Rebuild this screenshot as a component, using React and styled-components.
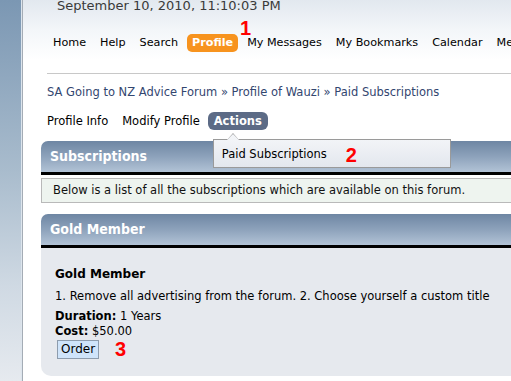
import React from "react";
import styled, { createGlobalStyle } from "styled-components";

const GlobalStyle = createGlobalStyle`
  html, body { margin: 0; padding: 0; overflow: hidden; background: #fff; }
  body { font-family: "DejaVu Sans", Verdana, sans-serif; font-size: 11.5px; color: #000; }
`;

const Shell = styled.div`
  display: flex;
  width: 511px;
  height: 381px;
  overflow: hidden;
`;

const Sidebar = styled.div`
  flex: 0 0 21px;
  background: linear-gradient(#7b97b3 0%, #a9bccd 45%, #cfd9e3 75%, #e6eaef 100%);
  border-right: 1px solid #dde5ed;
`;

const SideRule = styled.div`
  flex: 0 0 1px;
  background: #a4acb5;
`;

const Main = styled.div`
  flex: 1;
  min-width: 0;
  padding-left: 18px;
  background: linear-gradient(#e2e8ef 0px, #f3f6f9 30px, #ffffff 60px);
  overflow: hidden;
`;

const Top = styled.div`
  padding-left: 6px;
`;

const DateLine = styled.div`
  margin: -2px 0 0 10px;
  font-size: 13px;
  line-height: 16px;
  color: #3a3a3a;
  white-space: nowrap;
`;

const NavBar = styled.nav`
  display: flex;
  gap: 4px;
  margin: 20px 0 0 1px;
  font-size: 11.2px;
  white-space: nowrap;
`;

const NavItem = styled.span`
  position: relative;
  flex: none;
  padding: 0 5px;
  height: 18px;
  line-height: 18px;
  border-radius: 5px;
  background: ${(p) => (p.$active ? "#f7931e" : "transparent")};
  color: ${(p) => (p.$active ? "#fff" : "#000")};
  font-weight: ${(p) => (p.$active ? "bold" : "normal")};
`;

const Marker = styled.span`
  position: absolute;
  font-family: "Liberation Sans", Arial, sans-serif;
  font-weight: bold;
  font-size: 20px;
  line-height: 20px;
  color: #ff0000;
  top: ${(p) => p.$top}px;
  left: ${(p) => p.$left}px;
`;

const FlowMarker = styled.span`
  font-family: "Liberation Sans", Arial, sans-serif;
  font-weight: bold;
  font-size: 20px;
  line-height: 20px;
  color: #ff0000;
`;

const Divider = styled.hr`
  margin: 21px 0 0 0;
  border: 0;
  border-top: 1px solid #c8c8c8;
  height: 0;
`;

const Crumbs = styled.div`
  margin-top: 11px;
  line-height: 14px;
  color: #33466f;
  white-space: nowrap;
`;

const TabRow = styled.div`
  display: flex;
  gap: 2px;
  margin: 13px 0 0 -6px;
  white-space: nowrap;
`;

const Tab = styled.span`
  position: relative;
  flex: none;
  padding: 0 6px;
  height: 18px;
  line-height: 18px;
  border-radius: 6px;
  background: ${(p) => (p.$active ? "#5c6b86" : "transparent")};
  color: ${(p) => (p.$active ? "#fff" : "#000")};
  font-weight: ${(p) => (p.$active ? "bold" : "normal")};
`;

const Dropdown = styled.div`
  position: absolute;
  z-index: 5;
  top: 27px;
  left: 5px;
  width: 228px;
  height: 27px;
  padding-left: 8px;
  box-sizing: content-box;
  border: 1px solid #9a9a9a;
  background: linear-gradient(#f2f4f7, #e3e7ee);
  color: #000;
  font-weight: normal;
  line-height: 29px;

  &::before,
  &::after {
    content: "";
    position: absolute;
    left: 13px;
    width: 0;
    height: 0;
    border-left: 6px solid transparent;
    border-right: 6px solid transparent;
  }
  &::before {
    top: -7px;
    border-bottom: 7px solid #9a9a9a;
  }
  &::after {
    top: -6px;
    border-bottom: 6px solid #f2f4f7;
  }
`;

const SectionHeader = styled.div`
  margin-top: ${(p) => p.$gap}px;
  height: 31px;
  padding-left: 9px;
  border-top-left-radius: 7px;
  border-bottom: 3px solid #000;
  background: linear-gradient(#6e86a3, #8da2bb 50%, #b2c3d6);
  color: #fff;
  font-family: "DejaVu Sans Condensed", "Liberation Sans", sans-serif;
  font-stretch: condensed;
  font-weight: bold;
  font-size: 14px;
  line-height: 31px;
  white-space: nowrap;
`;

const InfoBox = styled.div`
  margin: 3px -4px 0 0;
  height: 23px;
  padding-left: 11px;
  border: 1px solid #b9b9b9;
  background: #eef4ef;
  line-height: 23px;
  color: #111;
  white-space: nowrap;
`;

const Panel = styled.div`
  height: 128px;
  box-sizing: border-box;
  padding: 18px 14px 0 14px;
  background: #e6e9ee;
  border-bottom-left-radius: 10px;
`;

const PlanTitle = styled.div`
  font-weight: bold;
  font-size: 12px;
  line-height: 16px;
`;

const PlanText = styled.div`
  margin-top: ${(p) => p.$gap || 0}px;
  line-height: 14px;
  white-space: nowrap;
  color: #000;
`;

const Label = styled.b`
  font-weight: bold;
`;

const OrderRow = styled.div`
  display: flex;
  align-items: center;
  gap: 16px;
  margin: 1px 0 0 2px;
`;

const OrderButton = styled.button`
  height: 19px;
  padding: 0 3px;
  border: 1px solid #8d9cad;
  background: #cfe4fa;
  font-family: "DejaVu Sans", Verdana, sans-serif;
  font-size: 12px;
  line-height: 17px;
  color: #000;
  border-radius: 0;
`;

export default function App() {
  const nav = ["Home", "Help", "Search", "Profile", "My Messages", "My Bookmarks", "Calendar", "Members"];
  return (
    <>
      <GlobalStyle />
      <Shell>
        <Sidebar />
        <SideRule />
        <Main>
          <Top>
            <DateLine>September 10, 2010, 11:10:03 PM</DateLine>
            <NavBar>
              {nav.map((n) => (
                <NavItem key={n} $active={n === "Profile"}>
                  {n}
                  {n === "Profile" && <Marker $top={-16} $left={53}>1</Marker>}
                </NavItem>
              ))}
            </NavBar>
            <Divider />
            <Crumbs>SA Going to NZ Advice Forum » Profile of Wauzi » Paid Subscriptions</Crumbs>
            <TabRow>
              <Tab>Profile Info</Tab>
              <Tab>Modify Profile</Tab>
              <Tab $active>
                Actions
                <Dropdown>
                  Paid Subscriptions
                  <Marker $top={5} $left={132}>2</Marker>
                </Dropdown>
              </Tab>
            </TabRow>
          </Top>
          <SectionHeader $gap={11}>Subscriptions</SectionHeader>
          <InfoBox>Below is a list of all the subscriptions which are available on this forum.</InfoBox>
          <SectionHeader $gap={11}>Gold Member</SectionHeader>
          <Panel>
            <PlanTitle>Gold Member</PlanTitle>
            <PlanText $gap={7}>1. Remove all advertising from the forum. 2. Choose yourself a custom title</PlanText>
            <PlanText $gap={6}>
              <Label>Duration:</Label> 1 Years
            </PlanText>
            <PlanText $gap={1}>
              <Label>Cost:</Label> $50.00
            </PlanText>
            <OrderRow>
              <OrderButton>Order</OrderButton>
              <FlowMarker>3</FlowMarker>
            </OrderRow>
          </Panel>
        </Main>
      </Shell>
    </>
  );
}
